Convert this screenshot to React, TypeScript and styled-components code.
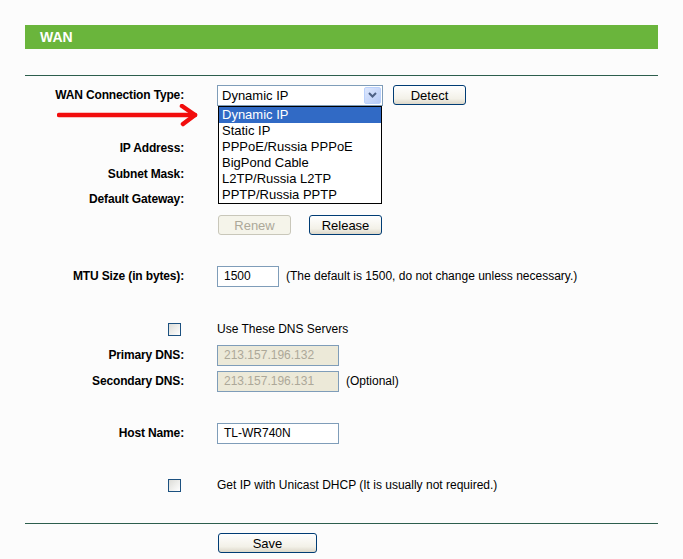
import React from 'react';
import styled, {createGlobalStyle} from "styled-components";

const GlobalStyle = createGlobalStyle`
  body {
    margin: 0;
    background: #fcfcfc;
    font-family: "Liberation Sans", Arial, sans-serif;
  }
`

const connectionTypes = [
    "Dynamic IP",
    "Static IP",
    "PPPoE/Russia PPPoE",
    "BigPond Cable",
    "L2TP/Russia L2TP",
    "PPTP/Russia PPTP",
];

const App = () => {
    return (
        <>
            <GlobalStyle/>
            <Page>
                <Header>WAN</Header>
                <Divider $top={26}/>
                <Form>
                    <Spacer $h={6}/>
                    <Row $h={26}>
                        <Label>WAN Connection Type:</Label>
                        <Control $gap={9}>
                            <SelectWrap>
                                <SelectBox>
                                    <span>Dynamic IP</span>
                                    <SelectArrow>
                                        <svg width="9" height="6" viewBox="0 0 9 6">
                                            <path d="M1 1 L4.5 4.5 L8 1" fill="none" stroke="#4d6185" strokeWidth="2"/>
                                        </svg>
                                    </SelectArrow>
                                </SelectBox>
                                <OptionList>
                                    {connectionTypes.map((t, i) => (
                                        <Option key={t} $active={i === 0}>{t}</Option>
                                    ))}
                                </OptionList>
                            </SelectWrap>
                            <Button $w={73}>Detect</Button>
                        </Control>
                    </Row>
                    <Spacer $h={27}/>
                    <Row $h={26}>
                        <Label>IP Address:</Label>
                        <Control/>
                    </Row>
                    <Row $h={25}>
                        <Label>Subnet Mask:</Label>
                        <Control/>
                    </Row>
                    <Row $h={26}>
                        <Label>Default Gateway:</Label>
                        <Control/>
                    </Row>
                    <Row $h={26}>
                        <Label/>
                        <Control $gap={17}>
                            <Button $w={73} disabled>Renew</Button>
                            <Button $w={73}>Release</Button>
                        </Control>
                    </Row>
                    <Spacer $h={25}/>
                    <Row $h={26}>
                        <Label>MTU Size (in bytes):</Label>
                        <Control $gap={7}>
                            <TextInput $w={62}>1500</TextInput>
                            <Note>(The default is 1500, do not change unless necessary.)</Note>
                        </Control>
                    </Row>
                    <Spacer $h={27}/>
                    <Row $h={26}>
                        <Label><Checkbox/></Label>
                        <Control><Note>Use These DNS Servers</Note></Control>
                    </Row>
                    <Row $h={26}>
                        <Label>Primary DNS:</Label>
                        <Control>
                            <TextInput $w={122} $disabled>213.157.196.132</TextInput>
                        </Control>
                    </Row>
                    <Row $h={26}>
                        <Label>Secondary DNS:</Label>
                        <Control $gap={7}>
                            <TextInput $w={122} $disabled>213.157.196.131</TextInput>
                            <Note>(Optional)</Note>
                        </Control>
                    </Row>
                    <Spacer $h={26}/>
                    <Row $h={26}>
                        <Label>Host Name:</Label>
                        <Control>
                            <TextInput $w={122}>TL-WR740N</TextInput>
                        </Control>
                    </Row>
                    <Spacer $h={26}/>
                    <Row $h={26}>
                        <Label><Checkbox/></Label>
                        <Control><Note>Get IP with Unicast DHCP (It is usually not required.)</Note></Control>
                    </Row>
                    <Spacer $h={25}/>
                    <Divider $top={0}/>
                    <Row $h={30} $top={9} $align="start">
                        <Label/>
                        <Control>
                            <Button $w={99}>Save</Button>
                        </Control>
                    </Row>
                    <RedArrow width="142" height="24" viewBox="0 0 142 24">
                        <path d="M2 11 L138 11" stroke="#f20d0d" strokeWidth="4.5" strokeLinecap="round"/>
                        <path d="M125 2 L138 11 L126 20" fill="none" stroke="#f20d0d" strokeWidth="4.5"
                              strokeLinecap="round" strokeLinejoin="round"/>
                    </RedArrow>
                </Form>
            </Page>
        </>
    );
};

export default App;

const Page = styled.div`
  width: 633px;
  padding: 25px 0 0 25px;
`

const Header = styled.div`
  height: 24px;
  background: #6ab53c;
  color: #fff;
  font-size: 14px;
  font-weight: bold;
  line-height: 24px;
  padding-left: 15px;
`

const Divider = styled.div<{$top: number}>`
  margin-top: ${props => props.$top}px;
  height: 1px;
  background: #2d5e4d;
`

const Form = styled.div`
  position: relative;
`

const Spacer = styled.div<{$h: number}>`
  height: ${props => props.$h}px;
`

const Row = styled.div<{$h: number, $top?: number, $align?: string}>`
  display: grid;
  grid-template-columns: 159px 1fr;
  column-gap: 33px;
  align-items: ${props => props.$align || "center"};
  height: ${props => props.$h}px;
  margin-top: ${props => props.$top || 0}px;
`

const Label = styled.div`
  display: flex;
  justify-content: flex-end;
  align-items: center;
  font-size: 12px;
  letter-spacing: -0.15px;
  font-weight: bold;
  color: #000;
`

const Control = styled.div<{$gap?: number}>`
  display: flex;
  align-items: center;
  gap: ${props => props.$gap ?? 10}px;
`

const SelectWrap = styled.div`
  position: relative;
`

const SelectBox = styled.div`
  box-sizing: border-box;
  width: 166px;
  height: 21px;
  border: 1px solid #7f9db9;
  background: #fff;
  display: flex;
  align-items: center;
  justify-content: space-between;
  padding-left: 4px;
  font-size: 13px;
  color: #000;
`

const SelectArrow = styled.div`
  box-sizing: border-box;
  width: 17px;
  height: 17px;
  margin-right: 1px;
  border: 1px solid #bad1fc;
  border-radius: 2px;
  background: linear-gradient(135deg, #dde7fd, #b6cbf7);
  display: flex;
  align-items: center;
  justify-content: center;
`

const OptionList = styled.div`
  position: absolute;
  top: 21px;
  left: 1px;
  width: 164px;
  box-sizing: border-box;
  border: 1px solid #000;
  background: #fff;
  z-index: 2;
`

const Option = styled.div<{$active?: boolean}>`
  height: 16px;
  line-height: 16px;
  padding-left: 3px;
  font-size: 13px;
  color: ${props => props.$active ? "#fff" : "#000"};
  background: ${props => props.$active ? "#316ac5" : "#fff"};
`

const Button = styled.button<{$w: number}>`
  box-sizing: border-box;
  width: ${props => props.$w}px;
  height: 20px;
  margin-left: 1px;
  padding: 0;
  border: 1px solid #003c74;
  border-radius: 3px;
  background: linear-gradient(#ffffff, #f3f1e8 70%, #dcd7c9);
  font-family: "Liberation Sans", Arial, sans-serif;
  font-size: 13px;
  color: #000;
  &:disabled {
    border-color: #c9c7ba;
    background: #f5f4ea;
    color: #aca899;
  }
`

const TextInput = styled.div<{$w: number, $disabled?: boolean}>`
  box-sizing: border-box;
  width: ${props => props.$w}px;
  height: 21px;
  border: 1px solid #7f9db9;
  background: ${props => props.$disabled ? "#ece9d8" : "#fff"};
  color: ${props => props.$disabled ? "#aca899" : "#000"};
  font-size: 12px;
  line-height: 19px;
  padding-left: 6px;
`

const Note = styled.span`
  font-size: 12px;
  color: #000;
`

const Checkbox = styled.div`
  box-sizing: border-box;
  width: 13px;
  height: 13px;
  margin-right: 3px;
  border: 1px solid #1c5180;
  background: linear-gradient(135deg, #dcdcd7, #ffffff);
`

const RedArrow = styled.svg`
  position: absolute;
  left: 32px;
  top: 28px;
`
